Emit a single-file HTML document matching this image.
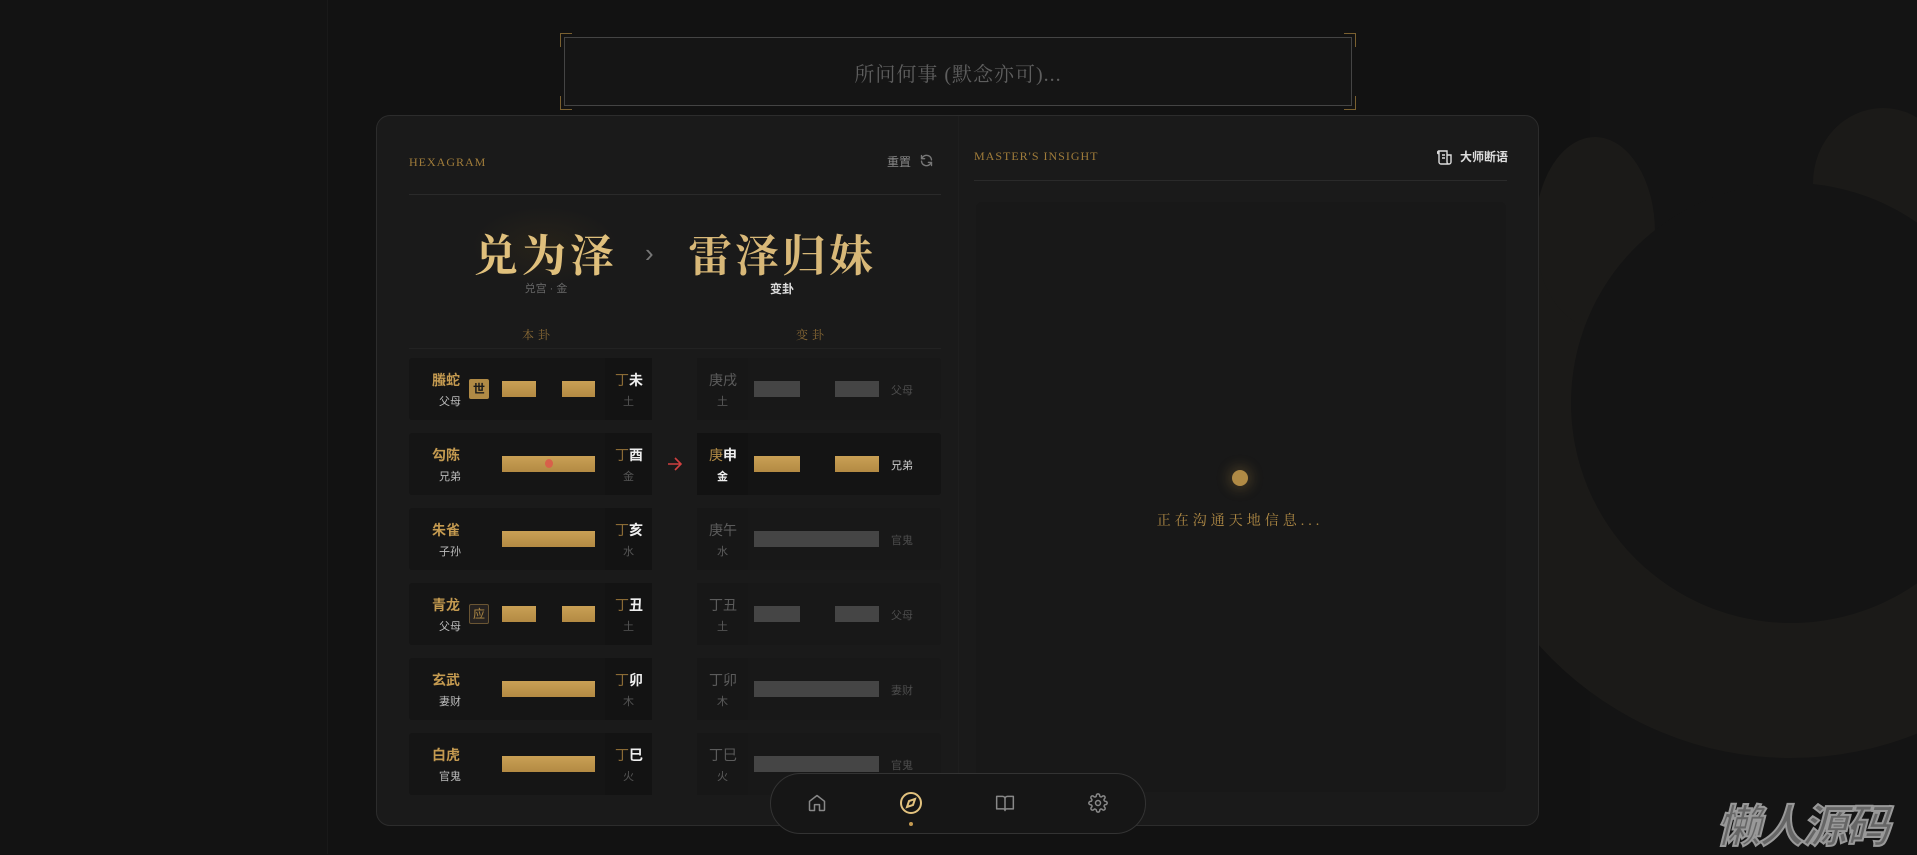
<!DOCTYPE html>
<html><head><meta charset="utf-8"><style>
*{margin:0;padding:0;box-sizing:border-box}
body{width:1917px;height:854px;overflow:hidden;background:#121212;font-family:"Liberation Sans","Noto Sans CJK SC",sans-serif;position:relative}
.a{position:absolute}
.serif{font-family:"Liberation Serif","Noto Serif CJK SC",serif}
.card{left:376px;top:115px;width:1163px;height:711px;background:#1a1a1a;border:1px solid #2c2c2c;border-radius:14px}
.lbl{color:#a07c3a;font-size:12px;letter-spacing:1px}
.row{position:absolute;height:62px}
.lb{left:409px;width:243px;background:#151515;border-radius:3px}
.lb .sub{position:absolute;left:196px;top:0;width:47px;height:62px;background:#131313}
.rb{left:697px;width:244px;background:#161616;border-radius:3px}
.rb .sub{position:absolute;left:0;top:0;width:51px;height:62px;background:#151515}
.t1{position:absolute;font-size:14px;font-weight:bold;color:#c49a50;top:12px}
.t2{position:absolute;font-size:11px;color:#bbb;top:35px}
.bar{position:absolute;top:23px;height:16px;background:linear-gradient(#c9a055,#b38a43)}
.gb{position:absolute;top:23px;height:16px;background:#7a7a7a}
.dim{opacity:.45}
</style></head><body>
<div class="a" style="left:0;top:0;width:328px;height:854px;background:#131313;border-right:1px solid #191919"></div>
<svg class="a" style="left:1480px;top:0" width="437" height="854">
<defs><clipPath id="lo"><rect x="0" y="300" width="437" height="600"/><rect x="0" y="200" width="110" height="200"/></clipPath></defs>
<rect x="110" y="0" width="327" height="854" fill="#141414"/>
<circle cx="311" cy="420" r="338" fill="#1b1a18" clip-path="url(#lo)"/>
<ellipse cx="115" cy="232" rx="60" ry="95" fill="#1b1a18"/>
<ellipse cx="403" cy="183" rx="70" ry="75" fill="#1b1a18"/>
<circle cx="311" cy="403" r="220" fill="#141414"/>
</svg>
<!-- input -->
<div class="a" style="left:564px;top:37px;width:788px;height:69px;border:1px solid #444;background:#151515"></div>
<div class="a" style="left:560px;top:33px;width:12px;height:14px;border-left:1px solid #7a6030;border-top:1px solid #7a6030"></div>
<div class="a" style="left:1344px;top:33px;width:12px;height:14px;border-right:1px solid #7a6030;border-top:1px solid #7a6030"></div>
<div class="a" style="left:560px;top:96px;width:12px;height:14px;border-left:1px solid #7a6030;border-bottom:1px solid #7a6030"></div>
<div class="a" style="left:1344px;top:96px;width:12px;height:14px;border-right:1px solid #7a6030;border-bottom:1px solid #7a6030"></div>
<div class="a serif" style="left:564px;top:58px;width:788px;text-align:center;font-size:20px;color:#5e5e5e;letter-spacing:1px">所问何事 (默念亦可)...</div>

<div class="a card"></div>
<div class="a lbl serif" style="left:409px;top:155px">HEXAGRAM</div>
<div class="a" style="left:887px;top:153px;font-size:12px;color:#888">重置</div>
<svg class="a" style="left:919px;top:153px" width="15" height="15" viewBox="0 0 24 24" fill="none" stroke="#777" stroke-width="2.2" stroke-linecap="round"><path d="M20 11a8 8 0 0 0-14-4.5L4 9M4 4v5h5M4 13a8 8 0 0 0 14 4.5L20 15M20 20v-5h-5"/></svg>
<div class="a" style="left:409px;top:194px;width:532px;height:1px;background:#2a2a2a"></div>

<div class="a" style="left:470px;top:206px;width:150px;height:80px;background:radial-gradient(ellipse,#262219 0%,transparent 70%)"></div>
<div class="a serif" style="left:466px;top:220px;width:160px;text-align:center;font-size:44px;font-weight:bold;color:#e0c07c;letter-spacing:4px">兑为泽</div>
<div class="a" style="left:645px;top:238px;font-size:26px;color:#777">›</div>
<div class="a serif" style="left:680px;top:220px;width:204px;text-align:center;font-size:44px;font-weight:bold;color:#d8b878;letter-spacing:3px">雷泽归妹</div>
<div class="a" style="left:496px;top:280px;width:100px;text-align:center;font-size:11px;color:#666">兑宫 · 金</div>
<div class="a" style="left:732px;top:280px;width:100px;text-align:center;font-size:12px;font-weight:bold;color:#ddd">变卦</div>
<div class="a serif" style="left:488px;top:326px;width:100px;text-align:center;font-size:12px;color:#8a6a35;letter-spacing:4px">本卦</div>
<div class="a serif" style="left:762px;top:326px;width:100px;text-align:center;font-size:12px;color:#8a6a35;letter-spacing:4px">变卦</div>
<div class="a" style="left:409px;top:348px;width:532px;height:1px;background:#222"></div>

<!-- rows -->
<div class="row lb" style="top:358px"><div class="sub"></div>
<div class="t1" style="left:23px">螣蛇</div><div class="t2" style="left:30px">父母</div>
<div class="a" style="left:60px;top:21px;width:20px;height:20px;background:#b08a45;border-radius:2px;color:#1a1a1a;font-size:12px;font-weight:bold;text-align:center;line-height:20px">世</div>
<div class="bar" style="left:93px;width:34px"></div><div class="bar" style="left:153px;width:33px"></div>
<div class="t1" style="left:206px;color:#eee"><span style="color:#8a6a35;font-weight:normal">丁</span>未</div><div class="t2" style="left:214px;color:#555">土</div></div>
<div class="row rb dim" style="top:358px"><div class="sub"></div>
<div class="t1" style="left:12px;color:#aaa;font-weight:normal">庚戌</div><div class="t2" style="left:20px;color:#aaa">土</div>
<div class="gb" style="left:57px;width:46px"></div><div class="gb" style="left:138px;width:44px"></div>
<div class="t2" style="left:194px;top:24px;color:#888">父母</div></div>

<div class="row lb" style="top:433px"><div class="sub"></div>
<div class="t1" style="left:23px">勾陈</div><div class="t2" style="left:30px">兄弟</div>
<div class="bar" style="left:93px;width:93px"></div>
<div class="a" style="left:136px;top:26px;width:8px;height:9px;border-radius:50%;background:#d8604a"></div>
<div class="t1" style="left:206px;color:#eee"><span style="color:#8a6a35;font-weight:normal">丁</span>酉</div><div class="t2" style="left:214px;color:#555">金</div></div>
<svg class="a" style="left:667px;top:456px" width="16" height="16" viewBox="0 0 16 16" fill="none" stroke="#d04040" stroke-width="1.6"><path d="M1 8h13M8 2l6 6-6 6"/></svg>
<div class="row rb" style="top:433px;background:#141414"><div class="sub" style="background:#121212"></div>
<div class="t1" style="left:12px;color:#eee"><span style="color:#b08a45;font-weight:normal">庚</span>申</div><div class="t2" style="left:20px;color:#eee;font-weight:bold">金</div>
<div class="bar" style="left:57px;width:46px"></div><div class="bar" style="left:138px;width:44px"></div>
<div class="t2" style="left:194px;top:24px;color:#ccc">兄弟</div></div>

<div class="row lb" style="top:508px"><div class="sub"></div>
<div class="t1" style="left:23px">朱雀</div><div class="t2" style="left:30px">子孙</div>
<div class="bar" style="left:93px;width:93px"></div>
<div class="t1" style="left:206px;color:#eee"><span style="color:#8a6a35;font-weight:normal">丁</span>亥</div><div class="t2" style="left:214px;color:#555">水</div></div>
<div class="row rb dim" style="top:508px"><div class="sub"></div>
<div class="t1" style="left:12px;color:#aaa;font-weight:normal">庚午</div><div class="t2" style="left:20px;color:#aaa">水</div>
<div class="gb" style="left:57px;width:125px"></div>
<div class="t2" style="left:194px;top:24px;color:#888">官鬼</div></div>

<div class="row lb" style="top:583px"><div class="sub"></div>
<div class="t1" style="left:23px">青龙</div><div class="t2" style="left:30px">父母</div>
<div class="a" style="left:60px;top:21px;width:20px;height:20px;border:1px solid #6a5533;background:#262220;border-radius:2px;color:#b08a45;font-size:12px;text-align:center;line-height:18px">应</div>
<div class="bar" style="left:93px;width:34px"></div><div class="bar" style="left:153px;width:33px"></div>
<div class="t1" style="left:206px;color:#eee"><span style="color:#8a6a35;font-weight:normal">丁</span>丑</div><div class="t2" style="left:214px;color:#555">土</div></div>
<div class="row rb dim" style="top:583px"><div class="sub"></div>
<div class="t1" style="left:12px;color:#aaa;font-weight:normal">丁丑</div><div class="t2" style="left:20px;color:#aaa">土</div>
<div class="gb" style="left:57px;width:46px"></div><div class="gb" style="left:138px;width:44px"></div>
<div class="t2" style="left:194px;top:24px;color:#888">父母</div></div>

<div class="row lb" style="top:658px"><div class="sub"></div>
<div class="t1" style="left:23px">玄武</div><div class="t2" style="left:30px">妻财</div>
<div class="bar" style="left:93px;width:93px"></div>
<div class="t1" style="left:206px;color:#eee"><span style="color:#8a6a35;font-weight:normal">丁</span>卯</div><div class="t2" style="left:214px;color:#555">木</div></div>
<div class="row rb dim" style="top:658px"><div class="sub"></div>
<div class="t1" style="left:12px;color:#aaa;font-weight:normal">丁卯</div><div class="t2" style="left:20px;color:#aaa">木</div>
<div class="gb" style="left:57px;width:125px"></div>
<div class="t2" style="left:194px;top:24px;color:#888">妻财</div></div>

<div class="row lb" style="top:733px"><div class="sub"></div>
<div class="t1" style="left:23px">白虎</div><div class="t2" style="left:30px">官鬼</div>
<div class="bar" style="left:93px;width:93px"></div>
<div class="t1" style="left:206px;color:#eee"><span style="color:#8a6a35;font-weight:normal">丁</span>巳</div><div class="t2" style="left:214px;color:#555">火</div></div>
<div class="row rb dim" style="top:733px"><div class="sub"></div>
<div class="t1" style="left:12px;color:#aaa;font-weight:normal">丁巳</div><div class="t2" style="left:20px;color:#aaa">火</div>
<div class="gb" style="left:57px;width:125px"></div>
<div class="t2" style="left:194px;top:24px;color:#888">官鬼</div></div>

<!-- right panel -->
<div class="a" style="left:958px;top:116px;width:1px;height:709px;background:#1e1e1e"></div>
<div class="a lbl serif" style="left:974px;top:149px">MASTER'S INSIGHT</div>
<svg class="a" style="left:1437px;top:149px" width="15" height="16" viewBox="0 0 15 16" fill="none" stroke="#ddd" stroke-width="1.4"><path d="M2 2h8v11a2 2 0 0 0 2 2H4a2 2 0 0 1-2-2V2zM2 2a1.5 1.5 0 0 0 0 3M10 6h4v7a2 2 0 0 1-2 2M5 6h3M5 9h3"/></svg>
<div class="a" style="left:1460px;top:148px;font-size:12px;font-weight:bold;color:#ddd">大师断语</div>
<div class="a" style="left:974px;top:180px;width:533px;height:1px;background:#2a2a2a"></div>
<div class="a" style="left:976px;top:202px;width:530px;height:590px;background:#181818;border-radius:6px"></div>
<div class="a" style="left:1232px;top:470px;width:16px;height:16px;border-radius:50%;background:#b08a45;box-shadow:0 0 12px 4px rgba(176,138,69,.25)"></div>
<div class="a serif" style="left:1090px;top:510px;width:300px;text-align:center;font-size:14px;color:#b08a45;letter-spacing:4px">正在沟通天地信息...</div>

<!-- nav -->
<div class="a" style="left:770px;top:773px;width:376px;height:61px;border-radius:31px;background:#161616;border:1px solid #333"></div>
<svg class="a" style="left:807px;top:793px" width="20" height="20" viewBox="0 0 24 24" fill="none" stroke="#888" stroke-width="1.8" stroke-linejoin="round"><path d="M3 10l9-7 9 7v10a1 1 0 0 1-1 1h-5v-7h-6v7H4a1 1 0 0 1-1-1z"/></svg>
<svg class="a" style="left:899px;top:791px" width="24" height="24" viewBox="0 0 24 24" fill="none" stroke="#e2c27e" stroke-width="2"><circle cx="12" cy="12" r="10"/><path d="M16 8l-2 6-6 2 2-6z"/></svg>
<div class="a" style="left:909px;top:822px;width:4px;height:4px;border-radius:50%;background:#c49a50"></div>
<svg class="a" style="left:995px;top:793px" width="20" height="20" viewBox="0 0 24 24" fill="none" stroke="#888" stroke-width="1.8" stroke-linejoin="round"><path d="M2 4h7a3 3 0 0 1 3 3v14a2 2 0 0 0-2-2H2zM22 4h-7a3 3 0 0 0-3 3v14a2 2 0 0 1 2-2h8z"/></svg>
<svg class="a" style="left:1088px;top:793px" width="20" height="20" viewBox="0 0 24 24" fill="none" stroke="#888" stroke-width="1.8"><circle cx="12" cy="12" r="3"/><path d="M19.4 15a1.7 1.7 0 0 0 .3 1.8l.1.1a2 2 0 1 1-2.8 2.8l-.1-.1a1.7 1.7 0 0 0-1.8-.3 1.7 1.7 0 0 0-1 1.5V21a2 2 0 1 1-4 0v-.1a1.7 1.7 0 0 0-1.1-1.5 1.7 1.7 0 0 0-1.8.3l-.1.1a2 2 0 1 1-2.8-2.8l.1-.1a1.7 1.7 0 0 0 .3-1.8 1.7 1.7 0 0 0-1.5-1H3a2 2 0 1 1 0-4h.1a1.7 1.7 0 0 0 1.5-1.1 1.7 1.7 0 0 0-.3-1.8l-.1-.1a2 2 0 1 1 2.8-2.8l.1.1a1.7 1.7 0 0 0 1.8.3H9a1.7 1.7 0 0 0 1-1.5V3a2 2 0 1 1 4 0v.1a1.7 1.7 0 0 0 1 1.5 1.7 1.7 0 0 0 1.8-.3l.1-.1a2 2 0 1 1 2.8 2.8l-.1.1a1.7 1.7 0 0 0-.3 1.8V9a1.7 1.7 0 0 0 1.5 1H21a2 2 0 1 1 0 4h-.1a1.7 1.7 0 0 0-1.5 1z"/></svg>

<div class="a" style="left:1716px;top:790px;font-size:45px;font-weight:bold;font-style:italic;color:#666;-webkit-text-stroke:2px #999;letter-spacing:-2px;font-family:'Noto Sans CJK SC',sans-serif">懒人源码</div>
</body></html>
